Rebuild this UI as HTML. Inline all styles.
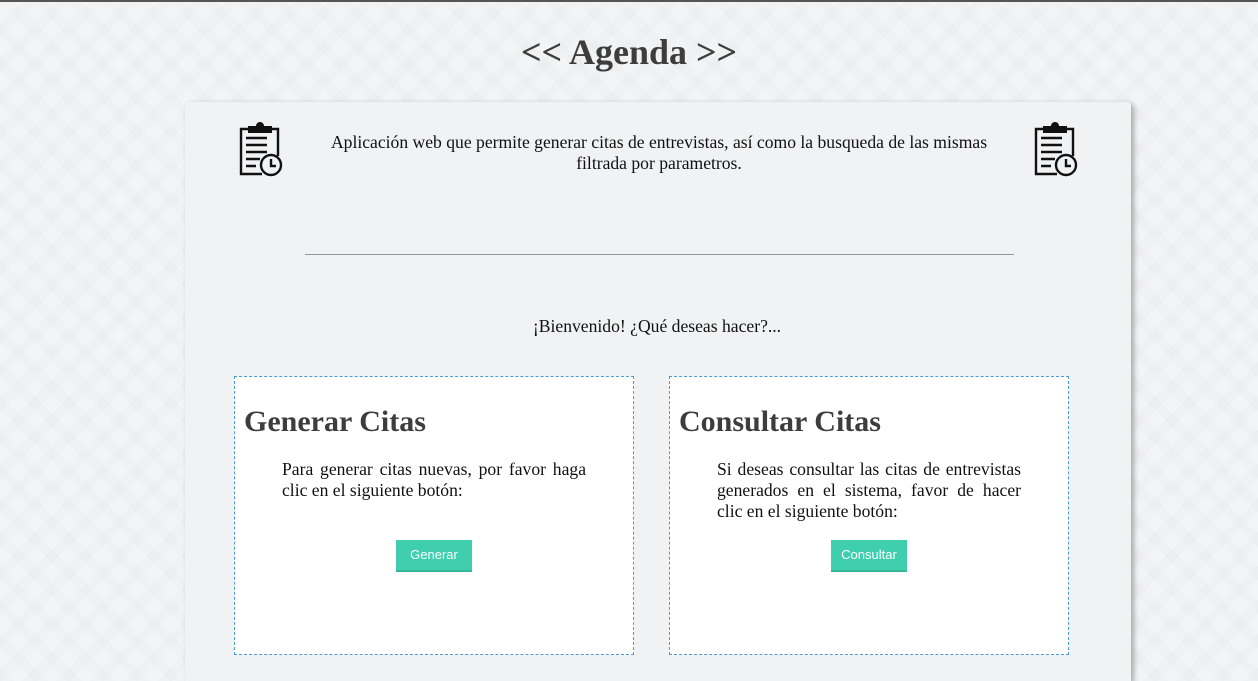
<!DOCTYPE html>
<html><head><meta charset="utf-8"><style>
html,body{margin:0;padding:0;width:1258px;height:681px;overflow:hidden}
body{background:#f3f4f5;font-family:"Liberation Serif",serif;position:relative;
background-image:repeating-linear-gradient(45deg,rgba(0,0,0,0.01) 0 10px,transparent 10px 24px),repeating-linear-gradient(-45deg,rgba(0,0,0,0.01) 0 10px,transparent 10px 24px);}
.top{position:absolute;left:0;top:0;width:1258px;height:2px;background:#555}
h1{position:absolute;top:32px;left:0;width:1258px;text-align:center;margin:0;font-size:36px;font-weight:bold;color:#3d3d3d;line-height:40px}
.card{position:absolute;left:185px;top:102px;width:946px;height:579px;background:#f1f2f4;border-radius:4px 4px 0 0;box-shadow:3px 2px 6px rgba(0,0,0,0.3)}
.desc{position:absolute;left:320px;top:132px;width:678px;text-align:center;font-size:17.6px;line-height:21px;color:#111}
.hr{position:absolute;left:305px;top:254px;width:709px;height:1px;background:#999}
.wel{position:absolute;left:0;top:316px;width:1314px;text-align:center;font-size:17.6px;color:#111}
.box{position:absolute;top:376px;width:398px;height:277px;background:#fff;border:1px dashed #4a9ad4}
.box h2{margin:0;position:absolute;left:9px;top:28px;font-size:30px;color:#3d3d3d;font-weight:bold}
.box p{position:absolute;left:47px;top:82px;width:304px;margin:0;text-align:justify;font-size:17.6px;line-height:21px;color:#111}
.btn{position:absolute;top:163px;width:76px;height:32px;background:#3fcfae;border-bottom:2px solid #35b896;box-sizing:border-box;color:#fff;font-family:"Liberation Sans",sans-serif;font-size:13px;text-align:center;line-height:30px}
svg{position:absolute}
</style></head><body>
<div class="top"></div>
<h1>&lt;&lt; Agenda &gt;&gt;</h1>
<div class="card"></div>
<svg style="left:236px;top:122px" width="50" height="56" viewBox="0 0 50 56"><g fill="none" stroke="#111" stroke-width="2.4"><path d="M26 52H5V7h37v27"/><path d="M10 16h21M10 23h21M10 30h21M10 37h14M10 44h10"/><circle cx="35" cy="43" r="10" fill="#f1f2f4"/><path d="M35 37v7h5"/></g><path d="M12 4h8a4 4 0 0 1 8 0h8v7H12z" fill="#111"/></svg>
<svg style="left:1031px;top:122px" width="50" height="56" viewBox="0 0 50 56"><g fill="none" stroke="#111" stroke-width="2.4"><path d="M26 52H5V7h37v27"/><path d="M10 16h21M10 23h21M10 30h21M10 37h14M10 44h10"/><circle cx="35" cy="43" r="10" fill="#f1f2f4"/><path d="M35 37v7h5"/></g><path d="M12 4h8a4 4 0 0 1 8 0h8v7H12z" fill="#111"/></svg>
<div class="desc">Aplicación web que permite generar citas de entrevistas, así como la busqueda de las mismas filtrada por parametros.</div>
<div class="hr"></div>
<div class="wel">¡Bienvenido! ¿Qué deseas hacer?...</div>
<div class="box" style="left:234px"><h2>Generar Citas</h2><p>Para generar citas nuevas, por favor haga clic en el siguiente botón:</p><div class="btn" style="left:161px">Generar</div></div>
<div class="box" style="left:669px"><h2>Consultar Citas</h2><p>Si deseas consultar las citas de entrevistas generados en el sistema, favor de hacer clic en el siguiente botón:</p><div class="btn" style="left:161px">Consultar</div></div>
</body></html>
